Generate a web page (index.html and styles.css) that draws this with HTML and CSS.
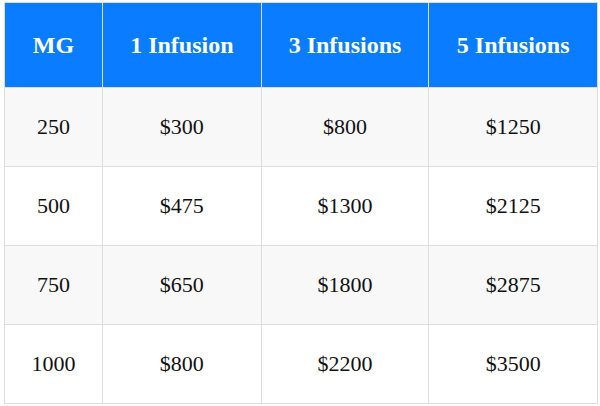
FILE: index.html
```html
<!DOCTYPE html>
<html>
<head>
<meta charset="utf-8">
<link rel="stylesheet" href="styles.css">
</head>
<body>
<table class="price-table">
  <thead>
    <tr>
      <th class="col-mg">MG</th>
      <th class="col-1">1 Infusion</th>
      <th class="col-3">3 Infusions</th>
      <th class="col-5">5 Infusions</th>
    </tr>
  </thead>
  <tbody>
    <tr><td>250</td><td>$300</td><td>$800</td><td>$1250</td></tr>
    <tr><td>500</td><td>$475</td><td>$1300</td><td>$2125</td></tr>
    <tr><td>750</td><td>$650</td><td>$1800</td><td>$2875</td></tr>
    <tr><td>1000</td><td>$800</td><td>$2200</td><td>$3500</td></tr>
  </tbody>
</table>
</body>
</html>
```
FILE: styles.css
```css
html, body {
  margin: 0;
  background: #ffffff;
}
body {
  padding: 2px 2px 0 4px;
  font-family: "Liberation Serif", "Times New Roman", serif;
}
.price-table {
  width: 594px;
  border-collapse: collapse;
  color: #111;
}
.price-table th,
.price-table td {
  border: 1px solid #dddddd;
  text-align: center;
  padding: 0;
}
.price-table th {
  background: #0a7cff;
  color: #ffffff;
  font-weight: bold;
  font-size: 24px;
  height: 84px;
}
.price-table td {
  font-size: 22px;
  height: 78px;
}
.price-table tbody tr:nth-child(odd) td {
  background: #f8f8f8;
}
.col-mg { width: 98px; }
.col-1 { width: 159px; }
.col-3 { width: 168px; }
.col-5 { width: 169px; }
```
